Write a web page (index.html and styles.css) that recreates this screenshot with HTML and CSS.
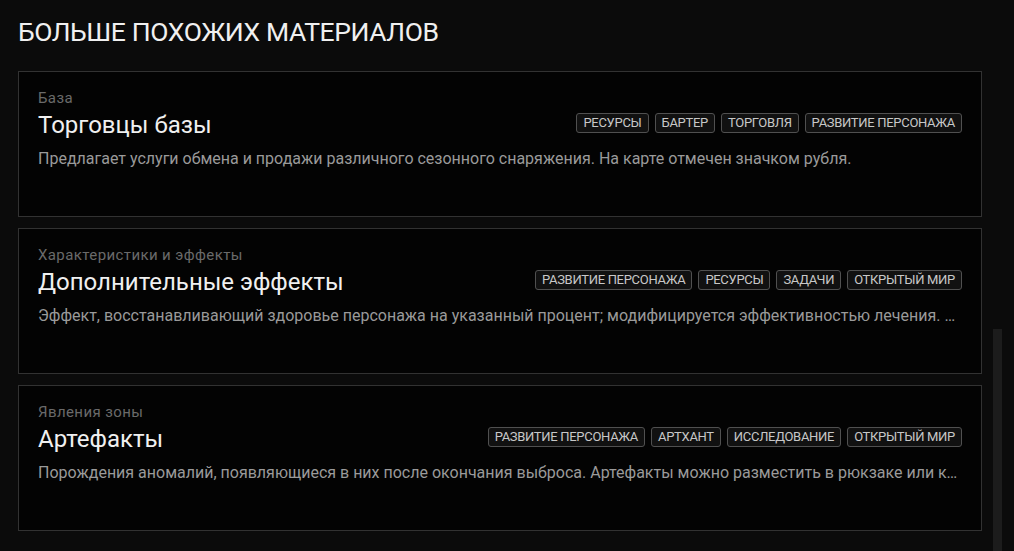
FILE: index.html
```html
<!DOCTYPE html>
<html lang="ru">
<head>
<meta charset="utf-8">
<link rel="stylesheet" href="styles.css">
</head>
<body>
<div class="page">
  <main class="content">
    <h2 class="heading">БОЛЬШЕ ПОХОЖИХ МАТЕРИАЛОВ</h2>
    <div class="list">
      <article class="card">
        <div class="cat">База</div>
        <div class="row">
          <h3 class="title">Торговцы базы</h3>
          <div class="tags">
            <span class="tag">Ресурсы</span>
            <span class="tag">Бартер</span>
            <span class="tag">Торговля</span>
            <span class="tag">Развитие персонажа</span>
          </div>
        </div>
        <p class="desc">Предлагает услуги обмена и продажи различного сезонного снаряжения. На карте отмечен значком рубля.</p>
      </article>
      <article class="card">
        <div class="cat">Характеристики и эффекты</div>
        <div class="row">
          <h3 class="title">Дополнительные эффекты</h3>
          <div class="tags">
            <span class="tag">Развитие персонажа</span>
            <span class="tag">Ресурсы</span>
            <span class="tag">Задачи</span>
            <span class="tag">Открытый мир</span>
          </div>
        </div>
        <p class="desc">Эффект, восстанавливающий здоровье персонажа на указанный процент; модифицируется эффективностью лечения. Может суммироваться с другими эффектами.</p>
      </article>
      <article class="card">
        <div class="cat">Явления зоны</div>
        <div class="row">
          <h3 class="title">Артефакты</h3>
          <div class="tags">
            <span class="tag">Развитие персонажа</span>
            <span class="tag">Артхант</span>
            <span class="tag">Исследование</span>
            <span class="tag">Открытый мир</span>
          </div>
        </div>
        <p class="desc">Порождения аномалий, появляющиеся в них после окончания выброса. Артефакты можно разместить в рюкзаке или контейнере.</p>
      </article>
    </div>
  </main>
  <div class="scrollbar"><div class="thumb"></div></div>
</div>
</body>
</html>
```
FILE: styles.css
```css
* { box-sizing: border-box; }
html, body { margin: 0; height: 100%; }
body {
  background: #0b0b0b;
  font-family: Roboto, "Noto Sans", "Liberation Sans", sans-serif;
  color: #fff;
  overflow: hidden;
}
.page {
  display: flex;
  height: 551px;
}
.content {
  flex: 1;
  min-width: 0;
  padding: 0 0 0 18px;
}
.heading {
  margin: 0;
  padding-top: 16px;
  height: 71px;
  font-size: 26.5px;
  font-weight: 400;
  color: #f0f0f0;
  letter-spacing: -0.4px;
  line-height: 32px;
}
.list {
  display: flex;
  flex-direction: column;
  gap: 11px;
}
.card {
  height: 146px;
  min-width: 0;
  background: #030303;
  border: 1px solid #323232;
  padding: 17px 19px 0 19px;
}
.cat {
  font-size: 15px;
  line-height: 18px;
  color: #6a6a6a;
  letter-spacing: 0.4px;
}
.row {
  display: flex;
  align-items: center;
  justify-content: space-between;
  height: 32px;
}
.title {
  margin: 0;
  padding-top: 4px;
  font-size: 24px;
  font-weight: 400;
  line-height: 30px;
  color: #f0f0f0;
  white-space: nowrap;
}
.tags {
  display: flex;
  gap: 6px;
  flex-shrink: 0;
}
.tag {
  display: block;
  height: 20px;
  padding: 0 6px;
  border: 1px solid #505050;
  border-radius: 3px;
  background: #111;
  font-size: 13px;
  line-height: 18px;
  text-transform: uppercase;
  color: #c8c8c8;
  letter-spacing: -0.3px;
}
.desc {
  margin: 10px 0 0;
  font-size: 16px;
  line-height: 20px;
  color: #9a9a9a;
  white-space: nowrap;
  overflow: hidden;
  text-overflow: ellipsis;
}
.scrollbar {
  flex: 0 0 32px;
  display: flex;
  flex-direction: column;
  justify-content: flex-end;
  padding: 0 12px 0 11px;
}
.thumb {
  height: 222px;
  background: #1c1c1c;
}
```
